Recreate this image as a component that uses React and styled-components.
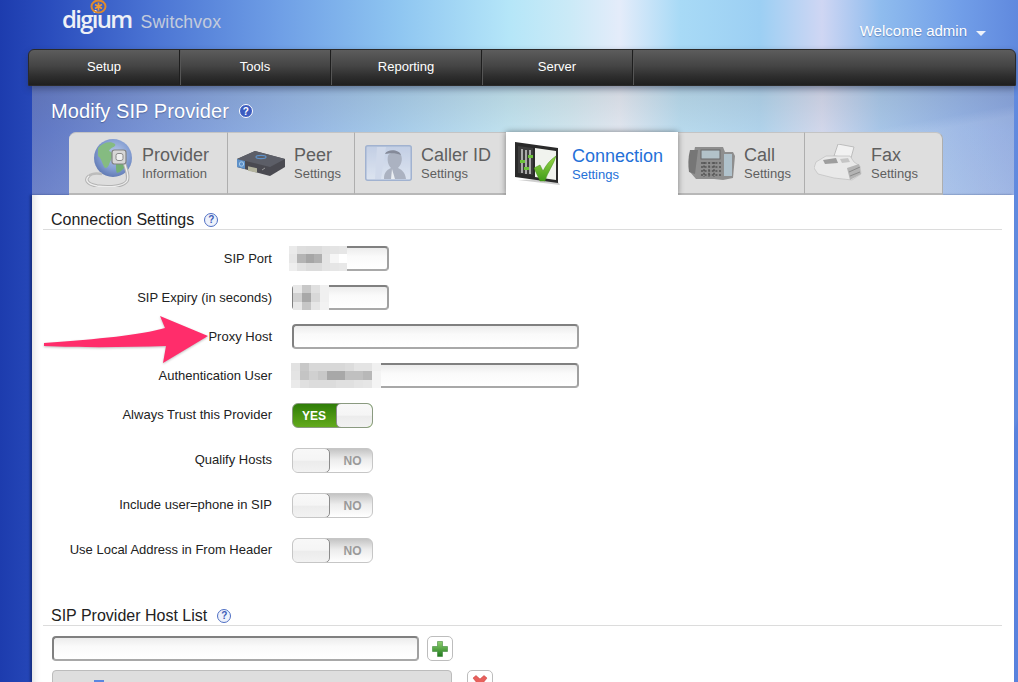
import React from "react";
import styled, { createGlobalStyle } from "styled-components";

const GlobalStyle = createGlobalStyle`
  html, body {
    margin: 0;
    height: 682px;
    overflow: hidden;
    background: #fff;
    font-family: "Liberation Sans", Arial, sans-serif;
  }
  * { box-sizing: border-box; }
`;

const Page = styled.div`
  position: relative;
  width: 1018px;
  height: 682px;
  overflow: hidden;
  background:
    linear-gradient(108deg, rgba(90, 130, 220, 0) 93%, rgba(84, 124, 220, 0.55) 93.2%),
    linear-gradient(90deg, #1d3cae 0, #2a4dbd 50px, #4a73d3 150px, #6f9fe6 280px, #8fc6f1 400px,
      #b5e6f8 510px, #cbeaf7 570px, #e4ecfa 620px, #a8daf6 680px, #9ccff3 760px, #cfd6f3 822px,
      #8fbcee 880px, #719ee8 960px, #6089de 1018px);
`;

const Header = styled.header`
  height: 49px;
  display: flex;
  align-items: flex-start;
  justify-content: space-between;
  padding: 0 32px 0 62px;
`;

const Logo = styled.div`
  position: relative;
  display: flex;
  align-items: baseline;
  gap: 9px;
  padding-top: 3px;
`;

const LogoMark = styled.svg`
  position: absolute;
  left: 28px;
  top: 0;
  width: 17px;
  height: 14px;
`;

const Brand = styled.span`
  font-family: "Open Sans", sans-serif;
  font-size: 24px;
  font-weight: 600;
  letter-spacing: -1.7px;
  line-height: 32px;
  color: #eef0f6;
`;

const Product = styled.span`
  font-size: 17.7px;
  color: #c3cbdc;
  letter-spacing: 0.1px;
`;

const Welcome = styled.div`
  display: flex;
  align-items: center;
  gap: 9px;
  margin-top: 22px;
  font-size: 15px;
  line-height: 18px;
  color: #fff;
  text-shadow: 0 1px 1px rgba(60, 90, 150, 0.5);
`;

const Caret = styled.span`
  width: 0;
  height: 0;
  margin-top: 5px;
  border-left: 5px solid transparent;
  border-right: 5px solid transparent;
  border-top: 5px solid #eef2fa;
`;

const Nav = styled.nav`
  position: relative;
  z-index: 1;
  display: flex;
  width: 988px;
  height: 37px;
  margin-left: 28px;
  border: 1px solid #2a2a2a;
  border-radius: 6px 6px 0 0;
  background: linear-gradient(#5c5c5c, #454545 45%, #2e2e2e 75%, #1f1f1f);
  box-shadow: 0 3px 6px rgba(30, 40, 70, 0.45);
`;

const NavItem = styled.div`
  width: 151px;
  line-height: 33px;
  text-align: center;
  font-size: 13px;
  color: #fff;
  border-right: 1px solid #1e1e1e;
  box-shadow: 1px 0 0 #555;
`;

const Panel = styled.main`
  width: 982px;
  margin-left: 32px;
`;

const PanelTop = styled.div`
  height: 109px;
  padding-top: 14px;
  background:
    linear-gradient(170deg, rgba(255, 255, 255, 0) 68%, rgba(255, 255, 255, 0.12) 72%),
    linear-gradient(rgba(180, 180, 180, 0.4), rgba(215, 215, 215, 0.33) 40%, rgba(225, 225, 225, 0.38));
`;

const PageTitle = styled.h1`
  display: flex;
  align-items: center;
  gap: 10px;
  height: 22px;
  margin: 0 0 10px 19px;
  font-size: 20px;
  font-weight: 400;
  letter-spacing: 0.08px;
  color: #fff;
  text-shadow: 0 1px 1px rgba(40, 60, 110, 0.5);
`;

const Help = styled.span`
  display: inline-flex;
  align-items: center;
  justify-content: center;
  width: 14px;
  height: 14px;
  border-radius: 50%;
  font-size: 10px;
  font-weight: 700;
  letter-spacing: 0;
  text-shadow: none;
  border: 1.5px solid ${(p) => (p.$solid ? "#fff" : "#4f6fc4")};
  background: ${(p) => (p.$solid ? "#3c5cc0" : "#eef2fb")};
  color: ${(p) => (p.$solid ? "#fff" : "#3d5cb8")};
`;

const Tabs = styled.div`
  display: flex;
  width: 874px;
  height: 63px;
  margin-left: 37px;
`;

const Tab = styled.div`
  display: grid;
  grid-template-columns: 66px auto;
  align-items: center;
  justify-items: center;
  width: ${(p) => p.$width}px;
  padding-left: ${(p) => (p.$indent ? 7 : 0)}px;
  background: ${(p) => (p.$active ? "#fff" : "#dedede")};
  border-right: ${(p) => (p.$active || p.$beforeActive ? "none" : "1px solid #aeaeae")};
  border-bottom: ${(p) => (p.$active ? "none" : "2px solid #b8b8b8")};
  border-top: 1px solid ${(p) => (p.$active ? "#fff" : "#c4c4c4")};
  border-radius: ${(p) => p.$radius || "0"};
  box-shadow: ${(p) => (p.$active ? "0 0 6px rgba(0, 0, 0, 0.45)" : "none")};
  clip-path: ${(p) => (p.$active ? "inset(-8px -8px 0 -8px)" : "none")};
  position: ${(p) => (p.$active ? "relative" : "static")};

  svg {
    opacity: ${(p) => (p.$active ? 1 : 0.8)};
  }
`;

const TabText = styled.div`
  justify-self: start;
  color: ${(p) => (p.$active ? "#2470d8" : "#5f5f5f")};
`;

const TabTitle = styled.div`
  font-size: 18px;
  line-height: 21px;
  white-space: nowrap;
`;

const TabSub = styled.div`
  font-size: 13px;
  line-height: 16px;
`;

const Content = styled.div`
  height: 487px;
  padding: 13px 12px 0 11px;
  background: #fff;
  box-shadow: inset 9px 0 8px -8px rgba(0, 0, 0, 0.16), -2px 0 2px rgba(10, 25, 80, 0.5);
`;

const SectionHead = styled.h2`
  display: flex;
  align-items: center;
  gap: 10px;
  height: 22px;
  margin: ${(p) => p.$top || 0}px 0 0;
  padding: 2px 0 0 8px;
  font-size: 16px;
  font-weight: 400;
  color: #222;
  border-bottom: 1px solid #dcdcdc;
`;

const Fields = styled.div`
  margin-top: 16px;
`;

const Field = styled.div`
  display: grid;
  grid-template-columns: 229px auto;
  grid-template-rows: 25px;
  column-gap: 20px;
  align-items: center;
  height: 25px;
  margin-bottom: ${(p) => p.$after}px;
`;

const Label = styled.label`
  text-align: right;
  font-size: 13px;
  color: #222;
`;

const Input = styled.div`
  position: relative;
  width: ${(p) => p.$width}px;
  height: 25px;
  border: 2px solid #808080;
  border-bottom-color: #a8a8a8;
  border-right-color: #a0a0a0;
  border-radius: 4px;
  background: linear-gradient(#ececec, #fafafa 40%, #fff);
`;

const Mosaic = styled.div`
  position: absolute;
  left: ${(p) => p.$left}px;
  top: -2px;
  display: grid;
  grid-auto-rows: 8.33px;
  grid-template-columns: repeat(${(p) => p.$cols}, ${(p) => p.$cell || 9}px);
`;

const Cell = styled.span`
  background: ${(p) => p.$c};
`;

const Toggle = styled.div`
  display: flex;
  align-self: start;
  width: 81px;
  height: 25px;
  margin-top: 1px;
  border-radius: 6px;
  overflow: hidden;
  border: 1px solid ${(p) => (p.$on ? "#8a9a80" : "#c6c6c6")};
  background: ${(p) =>
    p.$on
      ? "linear-gradient(#2f7d08, #4c9612 55%, #62aa1c)"
      : "linear-gradient(#c4c4c4, #ececec 45%, #fff)"};
`;

const ToggleText = styled.span`
  flex: 1;
  text-align: center;
  line-height: 25px;
  font-size: 12px;
  font-weight: 700;
  color: ${(p) => (p.$on ? "#fff" : "#9a9a9a")};
  padding-left: ${(p) => (p.$on ? 0 : 4)}px;
  padding-right: ${(p) => (p.$on ? 2 : 0)}px;
`;

const Knob = styled.span`
  width: ${(p) => (p.$on ? 37 : 38)}px;
  margin: -1px;
  border: 1px solid #8c8c8c;
  border-radius: 5px;
  background: linear-gradient(#f8f8f8, #f5f5f5 48%, #ececec 54%, #f2f2f2);
`;

const HostRow = styled.div`
  display: flex;
  align-items: flex-start;
  gap: ${(p) => p.$gap}px;
  margin: ${(p) => p.$top}px 0 0 9px;
`;

const IconButton = styled.button`
  display: flex;
  align-items: center;
  justify-content: center;
  width: 26px;
  height: 25px;
  padding: 0;
  background: #fff;
  border: 1px solid #bdbdbd;
  border-radius: 5px;
`;

const HostItem = styled.div`
  width: 400px;
  height: 30px;
  padding: 9px 0 0 41px;
  background: #dedede;
  border: 1px solid #bcbcbc;
  border-radius: 4px;
`;

const HostFlag = styled.span`
  display: block;
  width: 10px;
  height: 10px;
  background: #5b86e0;
`;

const Arrow = styled.svg`
  position: absolute;
  left: 40px;
  top: 312px;
  width: 172px;
  height: 56px;
  filter: drop-shadow(0 1px 1px rgba(0, 0, 0, 0.25));
`;

const Globe = () => (
  <svg width="48" height="48" viewBox="0 0 48 48">
    <defs>
      <radialGradient id="globeFill" cx="0.55" cy="0.4" r="0.65">
        <stop offset="0" stopColor="#b5c8ee" />
        <stop offset="0.6" stopColor="#6f8fd0" />
        <stop offset="1" stopColor="#3b5aa4" />
      </radialGradient>
    </defs>
    <circle cx="28" cy="19" r="19" fill="url(#globeFill)" />
    <path d="M13 9c5-6 13-7 17-4 2 3-5 3-6 7 4 1 4 5 2 9-2 3-2 8-6 8-3-4-3-9-7-12z" fill="#6fb36a" />
    <path d="M30 22c4-1 10 0 11 3-2 5-5 8-9 9-2-4 0-8-2-12z" fill="#5aa45c" />
    <path d="M4 37c-4 3-3 8 8 10 14 2 27 0 30-5 2-4 0-10-3-19" fill="none" stroke="#a9a9a9" strokeWidth="3.4" />
    <path d="M4 37c-4 3-3 8 8 10 14 2 27 0 30-5 2-4 0-10-3-19" fill="none" stroke="#f2f2f2" strokeWidth="1.4" />
    <path d="M4 37c3-3 7-3 13-2" fill="none" stroke="#b4b4b4" strokeWidth="2.6" />
    <rect x="27" y="11" width="14" height="14" rx="2.5" fill="#d6d6d6" stroke="#6c6c6c" strokeWidth="1.2" />
    <rect x="31" y="14.5" width="7" height="7" rx="2" fill="#f5f5f5" stroke="#777" />
  </svg>
);

const BoxIcon = () => (
  <svg width="48" height="30" viewBox="0 0 48 30">
    <path d="M0 11L18 3l30 8v8L33 28 0 19z" fill="#26262e" />
    <path d="M0 11l33 8 15-8L18 3z" fill="#3c3f4a" />
    <path d="M0 11l8 2v8l-8-2z" fill="#3f7fc4" />
    <circle cx="4.5" cy="16" r="2.2" fill="none" stroke="#9cc8ee" />
    <rect x="11" y="16" width="9" height="4.5" fill="#a9a98f" transform="skewY(12)" />
    <ellipse cx="24" cy="9" rx="5" ry="1.6" fill="none" stroke="#3f7fc4" strokeWidth="1.2" />
    <path d="M25 22l3-2" stroke="#888" />
  </svg>
);

const PersonIcon = () => (
  <svg width="47" height="36" viewBox="0 0 47 36">
    <defs>
      <linearGradient id="personBg" x1="0" x2="0" y1="0" y2="1">
        <stop offset="0" stopColor="#bccbe6" />
        <stop offset="1" stopColor="#dde6f5" />
      </linearGradient>
    </defs>
    <rect x="0.75" y="0.75" width="45.5" height="34.5" rx="2" fill="url(#personBg)" stroke="#92a8cd" strokeWidth="1.5" />
    <path d="M12 2h9l-5 32H10z" fill="#cdd9ee" />
    <path d="M19 34c0-7 3-9 7-11-3-3-4-8-3-12 1-4 11-5 13-1 2 5 0 10-3 13 4 2 7 4 8 11z" fill="#9fa8ba" />
    <path d="M20 9c2-5 14-5 16 1-5-2-10-2-16-1z" fill="#6f7688" />
    <path d="M27 24l3 10h-4z" fill="#eef2f8" />
  </svg>
);

const SlidersIcon = () => (
  <svg width="48" height="44" viewBox="0 0 48 44">
    <defs>
      <linearGradient id="checkFill" x1="0" x2="0" y1="0" y2="1">
        <stop offset="0" stopColor="#9ad84a" />
        <stop offset="1" stopColor="#3f9a18" />
      </linearGradient>
    </defs>
    <path d="M3 38l42 5-4-6z" fill="#bbb" opacity="0.7" />
    <path d="M0 0l43 6v35L0 35z" fill="#2a2a2a" />
    <path d="M3 4l15 2v27L3 31z" fill="#3d3d3d" />
    <path d="M20 6l21 3v29l-21-3z" fill="#f1f3ee" />
    <path d="M7 7v24M11 8v24M15 8v24" stroke="#e4e4e4" strokeWidth="1.3" />
    <rect x="5" y="18" width="5" height="3" fill="#6cc23a" />
    <rect x="9" y="25" width="5" height="3" fill="#6cc23a" />
    <rect x="13" y="13" width="5" height="3" fill="#6cc23a" />
    <path d="M19 26l6-3 3 6c3-6 7-11 13-15-2 8-9 17-11 25h-5z" fill="url(#checkFill)" stroke="#3c8a10" strokeWidth="0.5" />
  </svg>
);

const PhoneIcon = () => (
  <svg width="47" height="35" viewBox="0 0 47 35">
    <path d="M7 1h28l2 5h8l2 4-2 22-10 2-9-1H8L2 26z" fill="#7b7b7b" />
    <path d="M2 4c-2 8-2 15-1 22l6 2 3-24z" fill="#5d5d5d" />
    <rect x="13" y="4" width="19" height="9" fill="#a8bcc4" stroke="#4d4d4d" />
    <rect x="36" y="8" width="8" height="22" fill="#a5bcc8" />
    <path d="M13 17h20M13 21h20M13 25h20M13 29h20M16 16v15M21 16v15M26 16v15" stroke="#333" strokeWidth="1.6" strokeDasharray="2 1.6" />
  </svg>
);

const FaxIcon = () => (
  <svg width="48" height="38" viewBox="0 0 48 38">
    <path d="M20 12l4-12 16 3-3 11z" fill="#f6f6f6" stroke="#b4b4b4" />
    <path d="M2 18l10-6h24l4 6 6 4 1 8-9 6-18-2-16-4-4-6z" fill="#ececec" stroke="#b8b8b8" strokeWidth="0.7" />
    <path d="M9 16l13-2 2 5-13 1z" fill="#8f8f8f" />
    <path d="M26 15l8-1 2 4-8 1z" fill="#c0c0c0" />
    <path d="M33 24l12-4 2 10-11 6z" fill="#aaa" />
    <path d="M35 28l11-5M36 32l10-4" stroke="#777" />
  </svg>
);

const Plus = () => (
  <svg width="16" height="16" viewBox="0 0 16 16">
    <defs>
      <linearGradient id="plusFill" x1="0" x2="0" y1="0" y2="1">
        <stop offset="0" stopColor="#8fd070" />
        <stop offset="1" stopColor="#1f7a1c" />
      </linearGradient>
    </defs>
    <path d="M5.5 0.5h5v5h5v5h-5v5h-5v-5h-5v-5h5z" fill="url(#plusFill)" stroke="#2c7a2a" strokeWidth="0.5" />
  </svg>
);

const Cross = () => (
  <svg width="16" height="16" viewBox="0 0 16 16">
    <path d="M1 3l3-2.5L8 4l4-3.5L15 3l-4 5 4 5-3 2.5L8 12l-4 3.5L1 13l4-5z" fill="#e8605c" stroke="#c23a36" strokeWidth="0.5" />
  </svg>
);

const blur = {
  port: {
    left: -5,
    cols: 7,
    cell: 8.3,
    cells: [
      "#eaeaea", "#dedede", "#dcdcdc", "#dcdcdc", "#e2e2e2", "#e4e4e4", "#e6e6e6",
      "#e6e6e6", "#b4b4b4", "#a6a6a6", "#b0b0b0", "#e4e4e4", "#f6f6f6", "#ffffff",
      "#eeeeee", "#e2e2e2", "#dcdcdc", "#dcdcdc", "#e4e4e4", "#e6e6e6", "#e8e8e8"
    ]
  },
  expiry: {
    left: -1,
    cols: 4,
    cells: [
      "#e8e8e8", "#c8c8c8", "#e0e0e0", "#f0f0f0",
      "#d0d0d0", "#a8a8a8", "#d8d8d8", "#f0f0f0",
      "#e8e8e8", "#c6c6c6", "#e6e6e6", "#f2f2f2"
    ]
  },
  auth: {
    left: -3,
    cols: 10,
    cells: [
      "#e2e2e2", "#c8c8c8", "#d8d8d8", "#d8d8d8", "#d8d8d8", "#d8d8d8", "#dcdcdc", "#e4e4e4", "#e4e4e4", "#f0f0f0",
      "#e4e4e4", "#c4c4c4", "#d0d0d0", "#c8c8c8", "#a8a8a8", "#a8a8a8", "#c0c0c0", "#c0c0c0", "#b8b8b8", "#f4f4f4",
      "#eaeaea", "#e0e0e0", "#dcdcdc", "#dcdcdc", "#dcdcdc", "#e0e0e0", "#e0e0e0", "#e4e4e4", "#e6e6e6", "#f4f4f4"
    ]
  }
};

const tabs = [
  { title: "Provider", sub: "Information", width: 159, indent: true, icon: <Globe />, radius: "7px 0 0 0" },
  { title: "Peer", sub: "Settings", width: 127, icon: <BoxIcon /> },
  { title: "Caller ID", sub: "Settings", width: 151, icon: <PersonIcon />, beforeActive: true },
  { title: "Connection", sub: "Settings", width: 172, icon: <SlidersIcon />, active: true },
  { title: "Call", sub: "Settings", width: 127, icon: <PhoneIcon /> },
  { title: "Fax", sub: "Settings", width: 138, icon: <FaxIcon />, radius: "0 7px 0 0" }
];

const textFields = [
  { label: "SIP Port", width: 97, blur: blur.port },
  { label: "SIP Expiry (in seconds)", width: 97, blur: blur.expiry },
  { label: "Proxy Host", width: 287 },
  { label: "Authentication User", width: 287, blur: blur.auth }
];

const toggles = [
  { label: "Always Trust this Provider", on: true },
  { label: "Qualify Hosts" },
  { label: "Include user=phone in SIP" },
  { label: "Use Local Address in From Header" }
];

export default function App() {
  return (
    <Page>
      <GlobalStyle />
      <Header>
        <Logo>
          <LogoMark viewBox="0 0 17 14">
            <ellipse cx="8.5" cy="6.5" rx="7" ry="6" fill="none" stroke="#e08a2c" strokeWidth="2" />
            <path d="M8.5 2.5v8M5 4.5l7 4M12 4.5l-7 4" stroke="#f09a30" strokeWidth="1.7" />
          </LogoMark>
          <Brand>digium</Brand>
          <Product>Switchvox</Product>
        </Logo>
        <Welcome>
          Welcome admin
          <Caret />
        </Welcome>
      </Header>

      <Nav>
        {["Setup", "Tools", "Reporting", "Server"].map((item) => (
          <NavItem key={item}>{item}</NavItem>
        ))}
      </Nav>

      <Panel>
        <PanelTop>
          <PageTitle>
            Modify SIP Provider
            <Help $solid>?</Help>
          </PageTitle>
          <Tabs>
            {tabs.map((tab) => (
              <Tab
                key={tab.title}
                $width={tab.width}
                $active={tab.active}
                $beforeActive={tab.beforeActive}
                $indent={tab.indent}
                $radius={tab.radius}
              >
                {tab.icon}
                <TabText $active={tab.active}>
                  <TabTitle>{tab.title}</TabTitle>
                  <TabSub>{tab.sub}</TabSub>
                </TabText>
              </Tab>
            ))}
          </Tabs>
        </PanelTop>

        <Content>
          <SectionHead>
            Connection Settings
            <Help>?</Help>
          </SectionHead>
          <Fields>
            {textFields.map((field) => (
              <Field key={field.label} $after={14}>
                <Label>{field.label}</Label>
                <Input $width={field.width}>
                  {field.blur && (
                    <Mosaic $left={field.blur.left} $cols={field.blur.cols} $cell={field.blur.cell}>
                      {field.blur.cells.map((c, i) => (
                        <Cell key={i} $c={c} />
                      ))}
                    </Mosaic>
                  )}
                </Input>
              </Field>
            ))}
            {toggles.map((t) => (
              <Field key={t.label} $after={20}>
                <Label>{t.label}</Label>
                <Toggle $on={t.on}>
                  {t.on ? (
                    <>
                      <ToggleText $on>YES</ToggleText>
                      <Knob $on />
                    </>
                  ) : (
                    <>
                      <Knob />
                      <ToggleText>NO</ToggleText>
                    </>
                  )}
                </Toggle>
              </Field>
            ))}
          </Fields>

          <SectionHead $top={42}>
            SIP Provider Host List
            <Help>?</Help>
          </SectionHead>
          <HostRow $top={10} $gap={8}>
            <Input $width={367} />
            <IconButton>
              <Plus />
            </IconButton>
          </HostRow>
          <HostRow $top={9} $gap={15}>
            <HostItem>
              <HostFlag />
            </HostItem>
            <IconButton>
              <Cross />
            </IconButton>
          </HostRow>
        </Content>
      </Panel>

      <Arrow viewBox="0 0 172 56">
        <path d="M4 31C60 27 100 23 125 16L120 4l48 20-45 27 3-17C90 35 50 36 4 34z" fill="#ff2d6b" />
      </Arrow>
    </Page>
  );
}
